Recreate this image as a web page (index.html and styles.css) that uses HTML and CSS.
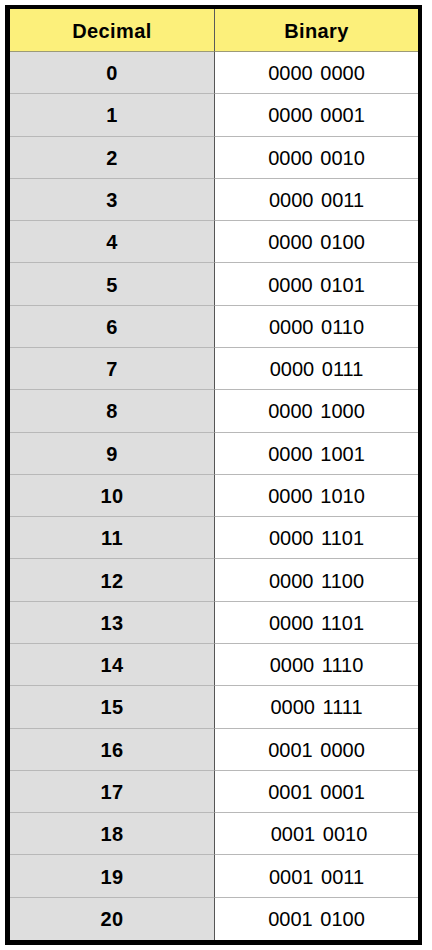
FILE: index.html
```html
<!DOCTYPE html>
<html>
<head>
<meta charset="utf-8">
<link rel="stylesheet" href="styles.css">
</head>
<body>
<div class="frame">
  <div class="table">
    <div class="cell head left">Decimal</div>
    <div class="cell head">Binary</div>
    <div class="cell dec">0</div><div class="cell bin">0000 0000</div>
    <div class="cell dec">1</div><div class="cell bin">0000 0001</div>
    <div class="cell dec">2</div><div class="cell bin">0000 0010</div>
    <div class="cell dec">3</div><div class="cell bin">0000 0011</div>
    <div class="cell dec">4</div><div class="cell bin">0000 0100</div>
    <div class="cell dec">5</div><div class="cell bin">0000 0101</div>
    <div class="cell dec">6</div><div class="cell bin">0000 0110</div>
    <div class="cell dec">7</div><div class="cell bin">0000 0111</div>
    <div class="cell dec">8</div><div class="cell bin">0000 1000</div>
    <div class="cell dec">9</div><div class="cell bin">0000 1001</div>
    <div class="cell dec">10</div><div class="cell bin">0000 1010</div>
    <div class="cell dec">11</div><div class="cell bin">0000 1101</div>
    <div class="cell dec">12</div><div class="cell bin">0000 1100</div>
    <div class="cell dec">13</div><div class="cell bin">0000 1101</div>
    <div class="cell dec">14</div><div class="cell bin">0000 1110</div>
    <div class="cell dec">15</div><div class="cell bin">0000 1111</div>
    <div class="cell dec">16</div><div class="cell bin">0001 0000</div>
    <div class="cell dec">17</div><div class="cell bin">0001 0001</div>
    <div class="cell dec">18</div><div class="cell bin shift">0001 0010</div>
    <div class="cell dec">19</div><div class="cell bin">0001 0011</div>
    <div class="cell dec last">20</div><div class="cell bin last">0001 0100</div>
  </div>
</div>
</body>
</html>
```

FILE: styles.css
```css
html, body {
  margin: 0;
  padding: 0;
  background: #ffffff;
}

body {
  font-family: "Liberation Sans", Arial, Helvetica, sans-serif;
  color: #000;
}

.frame {
  margin: 5px 0 0 5px;
  width: 408px;
  height: 931px;
  border-style: solid;
  border-color: #000;
  border-width: 4px 4px 5px 5px;
}

.table {
  display: grid;
  grid-template-columns: 205px 203px;
  grid-template-rows: 43px repeat(21, 1fr);
  height: 100%;
}

.cell {
  display: flex;
  align-items: center;
  justify-content: center;
  border-bottom: 1px solid #b8b8b8;
  font-size: 20px;
  padding-top: 2px;
  box-sizing: border-box;
  min-height: 0;
}

.head {
  background: #fcf07b;
  font-weight: bold;
  letter-spacing: 0.4px;
  border-bottom-color: #9c9a78;
}

.head.left {
  border-right: 1px solid #5a5a5a;
}

.dec {
  background: #dedede;
  font-weight: bold;
  letter-spacing: 0.5px;
  border-right: 1px solid #555555;
}

.bin {
  background: #ffffff;
  word-spacing: 2px;
}

.shift {
  padding-left: 5px;
}

.last {
  border-bottom: none;
}
```
